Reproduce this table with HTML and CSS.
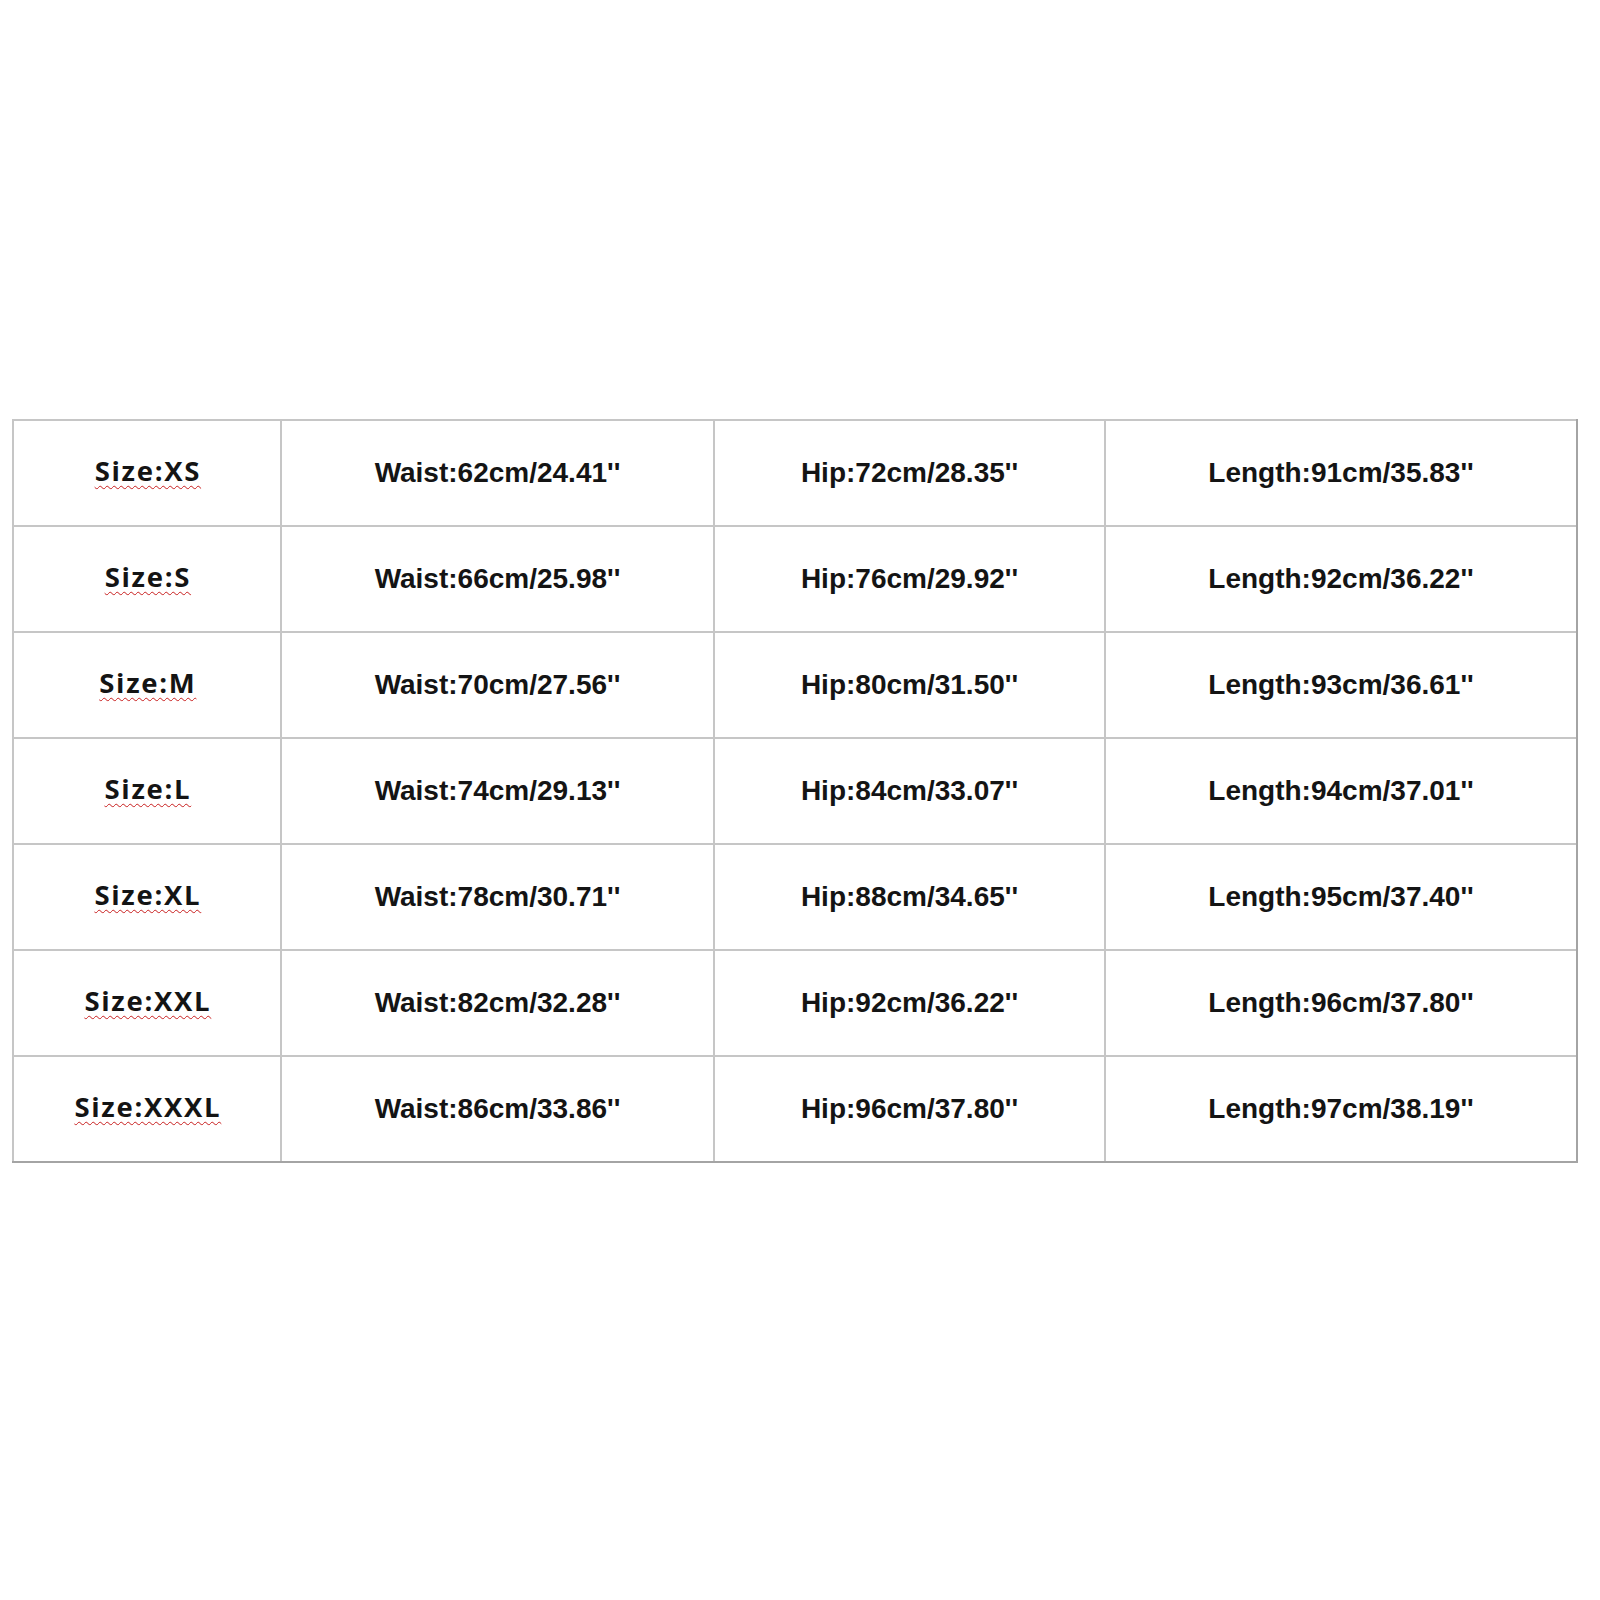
FILE: index.html
```html
<!DOCTYPE html>
<html>
<head>
<meta charset="utf-8">
<link rel="stylesheet" href="styles.css">
</head>
<body>
<div class="page">
  <div class="chart">
    <div class="cell size"><span class="sq">Size:XS</span></div>
    <div class="cell">Waist:62cm/24.41''</div>
    <div class="cell">Hip:72cm/28.35''</div>
    <div class="cell">Length:91cm/35.83''</div>

    <div class="cell size"><span class="sq">Size:S</span></div>
    <div class="cell">Waist:66cm/25.98''</div>
    <div class="cell">Hip:76cm/29.92''</div>
    <div class="cell">Length:92cm/36.22''</div>

    <div class="cell size"><span class="sq">Size:M</span></div>
    <div class="cell">Waist:70cm/27.56''</div>
    <div class="cell">Hip:80cm/31.50''</div>
    <div class="cell">Length:93cm/36.61''</div>

    <div class="cell size"><span class="sq">Size:L</span></div>
    <div class="cell">Waist:74cm/29.13''</div>
    <div class="cell">Hip:84cm/33.07''</div>
    <div class="cell">Length:94cm/37.01''</div>

    <div class="cell size"><span class="sq">Size:XL</span></div>
    <div class="cell">Waist:78cm/30.71''</div>
    <div class="cell">Hip:88cm/34.65''</div>
    <div class="cell">Length:95cm/37.40''</div>

    <div class="cell size"><span class="sq">Size:XXL</span></div>
    <div class="cell">Waist:82cm/32.28''</div>
    <div class="cell">Hip:92cm/36.22''</div>
    <div class="cell">Length:96cm/37.80''</div>

    <div class="cell size"><span class="sq">Size:XXXL</span></div>
    <div class="cell">Waist:86cm/33.86''</div>
    <div class="cell">Hip:96cm/37.80''</div>
    <div class="cell">Length:97cm/38.19''</div>
  </div>
</div>
</body>
</html>
```

FILE: styles.css
```css
html, body {
  margin: 0;
  padding: 0;
  background: #ffffff;
}

.page {
  width: 1600px;
  height: 1600px;
  padding-top: 419px;
  padding-left: 12px;
  box-sizing: border-box;
}

.chart {
  display: grid;
  grid-template-columns: 266px 431px 389px 470px;
  grid-auto-rows: 104px;
  gap: 2px;
  width: max-content;
  background: #c6c6c6;
  padding: 2px 0 0 2px;
  border-right: 2px solid #a4a4a4;
  border-bottom: 2px solid #a4a4a4;
}

.cell {
  background: #ffffff;
  display: flex;
  align-items: center;
  justify-content: center;
  font-family: "Liberation Sans", Arial, sans-serif;
  font-weight: bold;
  font-size: 28px;
  color: #141414;
  white-space: nowrap;
}

.size {
  font-family: "Open Sans", "Liberation Sans", sans-serif;
  font-weight: 700;
  font-size: 27.5px;
  letter-spacing: 1.7px;
  padding-bottom: 6px;
  box-sizing: border-box;
}

.sq {
  text-decoration: underline wavy #c81e1e;
  text-decoration-thickness: 1.2px;
  text-underline-offset: 4px;
  text-decoration-skip-ink: none;
  margin-right: -1.7px;
}
```
